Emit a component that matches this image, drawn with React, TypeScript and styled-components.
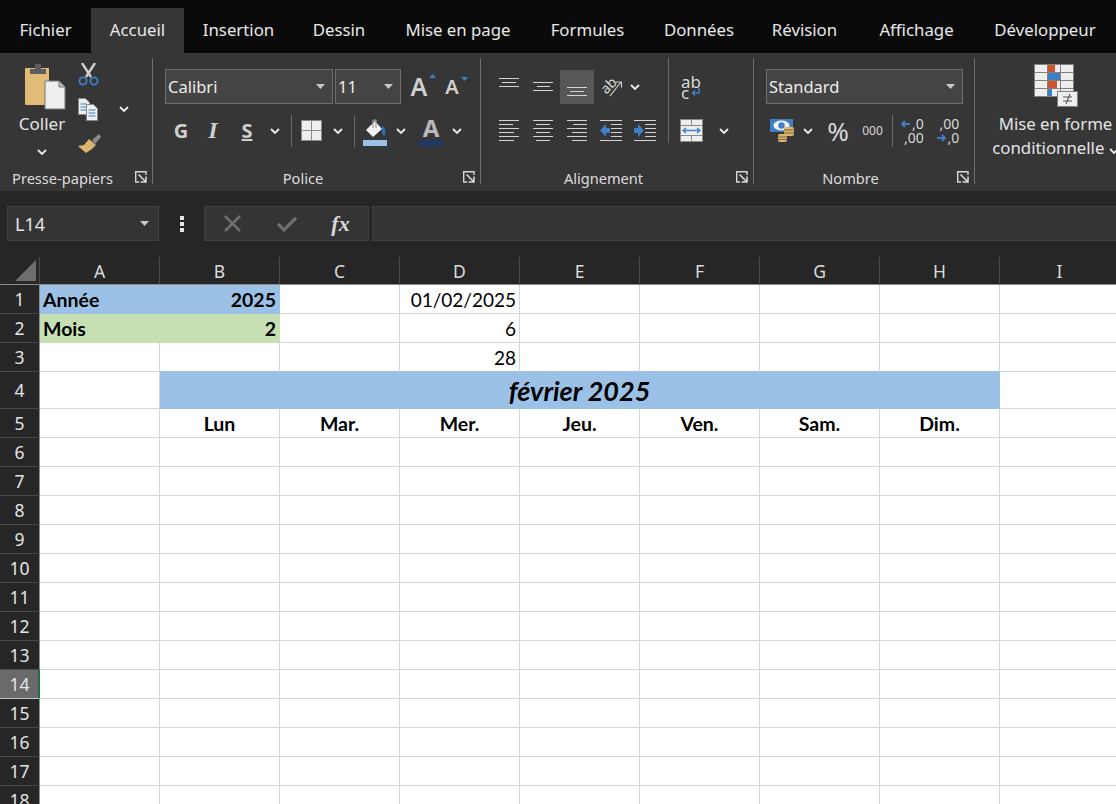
import React from "react";
import styled, { createGlobalStyle } from "styled-components";

const UI_FONT = `"Noto Sans", "Open Sans", sans-serif`;
const SHEET_FONT = `Lato, "Liberation Sans", sans-serif`;

const GlobalCSS = createGlobalStyle`
    html, body {
        margin: 0;
        height: 100%;
        overflow: hidden;
        background: #262626;
    }
    #root {
        height: 100%;
    }
`;

const WrapperCSS = styled.div`
    height: 804px;
    width: 1116px;
    overflow: hidden;
    display: flex;
    flex-direction: column;
    font-family: ${UI_FONT};
    color: #e4e4e4;
`;

/* ---------- tabs ---------- */

const TabBarCSS = styled.div`
    height: 45px;
    padding-top: 8px;
    background: #0a0a0a;
    display: flex;
    flex-shrink: 0;
`;

const TabCSS = styled.div<{ $w: number; $active?: boolean }>`
    width: ${(p) => p.$w}px;
    flex-shrink: 0;
    box-sizing: border-box;
    padding-bottom: 2px;
    display: flex;
    align-items: center;
    justify-content: center;
    font-size: 16.8px;
    white-space: nowrap;
    background: ${(p) => (p.$active ? "#363636" : "transparent")};
    color: #e8e8e8;
`;

/* ---------- ribbon ---------- */

const RibbonCSS = styled.div`
    height: 138px;
    flex-shrink: 0;
    box-sizing: border-box;
    padding: 5px 0 7px;
    background: #363636;
    display: flex;
`;

const GroupCSS = styled.div<{ $w: number; $last?: boolean }>`
    width: ${(p) => p.$w}px;
    flex-shrink: 0;
    box-sizing: border-box;
    display: flex;
    flex-direction: column;
    border-right: ${(p) => (p.$last ? "none" : "1px solid #6e6e6e")};
`;

const GroupBodyCSS = styled.div`
    flex: 1;
    min-height: 0;
    display: flex;
`;

const RowsCSS = styled.div<{ $left: number }>`
    padding: 11px 0 0 ${(p) => p.$left}px;
    display: flex;
    flex-direction: column;
    gap: 9px;
`;

const RowCSS = styled.div`
    height: 35px;
    display: flex;
    align-items: center;
`;

const GroupLabelRowCSS = styled.div`
    height: 14px;
    padding-right: 5px;
    display: flex;
    align-items: center;
`;

const GroupLabelCSS = styled.div`
    flex: 1;
    height: 14px;
    margin-right: 10px;
    text-align: center;
    font-size: 14.6px;
    line-height: 17px;
    white-space: nowrap;
    color: #dcdcdc;
`;

const ToolCSS = styled.div<{ $w: number; $active?: boolean }>`
    width: ${(p) => p.$w}px;
    height: ${(p) => (p.$active ? "34px" : "100%")};
    flex-shrink: 0;
    display: flex;
    align-items: center;
    justify-content: center;
    background: ${(p) => (p.$active ? "#575757" : "transparent")};
`;

const VRuleCSS = styled.div<{ $h?: number; $l?: number; $r?: number }>`
    width: 1px;
    height: ${(p) => p.$h ?? 32}px;
    flex-shrink: 0;
    margin-left: ${(p) => p.$l ?? 0}px;
    margin-right: ${(p) => p.$r ?? 0}px;
    background: #6a6a6a;
`;

const ComboCSS = styled.div<{ $w: number; $ml?: number }>`
    width: ${(p) => p.$w}px;
    height: 35px;
    margin-left: ${(p) => p.$ml ?? 0}px;
    box-sizing: border-box;
    flex-shrink: 0;
    padding: 0 7px 0 2px;
    display: flex;
    align-items: center;
    justify-content: space-between;
    background: #444444;
    border: 1px solid #6e6e6e;
    font-size: 16.5px;
    color: #ececec;
`;

const PasteColumnCSS = styled.div`
    width: 56px;
    margin-left: 14px;
    padding-top: 5px;
    display: flex;
    flex-direction: column;
    align-items: center;
    font-size: 17px;
`;

const PasteLabelCSS = styled.div`
    margin: 3px 0 14px;
    line-height: 22px;
`;

const ClipColumnCSS = styled.div`
    padding: 4px 0 0 8px;
    display: flex;
    flex-direction: column;
    gap: 11px;
`;

const ClipRowCSS = styled.div`
    height: 24px;
    display: flex;
    align-items: center;
    gap: 20px;
`;

const FormatBtnCSS = styled.span<{ $italic?: boolean; $underline?: boolean }>`
    font-family: ${(p) => (p.$italic ? `"Liberation Serif", serif` : UI_FONT)};
    font-size: ${(p) => (p.$italic ? "24px" : "20px")};
    font-weight: 700;
    font-style: ${(p) => (p.$italic ? "italic" : "normal")};
    text-decoration: ${(p) => (p.$underline ? "underline" : "none")};
    color: #cfcfcf;
`;

const FontSizeCSS = styled.span<{ $size: number }>`
    position: relative;
    font-size: ${(p) => p.$size}px;
    font-weight: 600;
    line-height: 1;
    color: #cfcfcf;
`;

const SizeArrowCSS = styled.svg`
    position: absolute;
    top: 0;
    right: -9px;
`;

const ColorPickCSS = styled.div`
    width: 24px;
    height: 30px;
    display: flex;
    flex-direction: column;
    align-items: center;
    justify-content: flex-end;
    font-size: 24px;
    line-height: 24px;
    font-weight: 700;
    color: #b8b8b8;
`;

const ColorBarCSS = styled.div<{ $color: string }>`
    width: 24px;
    height: 6px;
    flex-shrink: 0;
    background: ${(p) => p.$color};
`;

const WrapTextCSS = styled.div`
    width: 20px;
    font-size: 17px;
    line-height: 11px;
    color: #d8d8d8;
`;

const WrapLineCSS = styled.div`
    display: flex;
    align-items: center;
    gap: 2px;
`;

const PercentCSS = styled.span<{ $size: number }>`
    font-size: ${(p) => p.$size}px;
    color: #d8d8d8;
`;

const DecimalsCSS = styled.div`
    font-size: 14px;
    line-height: 14px;
    color: #d8d8d8;
    text-align: right;
`;

const DecimalLineCSS = styled.div`
    display: flex;
    align-items: center;
    justify-content: flex-end;
    gap: 2px;
`;

const CondFormatCSS = styled.div`
    padding: 6px 0 0 20px;
    display: flex;
    flex-direction: column;
    align-items: center;
    font-size: 16.8px;
    line-height: 24px;
    white-space: nowrap;
`;

const CondLabelCSS = styled.div`
    margin-top: 4px;
    text-align: center;
`;

/* ---------- formula bar ---------- */

const FormulaBarCSS = styled.div`
    height: 66px;
    flex-shrink: 0;
    box-sizing: border-box;
    padding: 15px 0 0 7px;
    background: #262626;
    display: flex;
    align-items: flex-start;
`;

const NameBoxCSS = styled.div`
    width: 152px;
    height: 35px;
    box-sizing: border-box;
    flex-shrink: 0;
    padding: 0 9px 0 7px;
    display: flex;
    align-items: center;
    justify-content: space-between;
    background: #343434;
    border: 1px solid #404040;
    font-size: 18px;
`;

const GripCSS = styled.div`
    width: 45px;
    height: 35px;
    flex-shrink: 0;
    display: flex;
    flex-direction: column;
    align-items: center;
    justify-content: center;
    gap: 2px;
`;

const GripDotCSS = styled.div`
    width: 4px;
    height: 4px;
    background: #e6e6e6;
`;

const FormulaBtnsCSS = styled.div`
    width: 165px;
    height: 35px;
    box-sizing: border-box;
    flex-shrink: 0;
    margin-right: 3px;
    padding-left: 1px;
    display: flex;
    align-items: center;
    background: #343434;
    border: 1px solid #404040;
`;

const FxCSS = styled.span`
    font-family: "Liberation Serif", serif;
    font-style: italic;
    font-weight: 700;
    font-size: 22px;
    color: #d8d8d8;
`;

const FormulaInputCSS = styled.div`
    flex: 1;
    height: 35px;
    box-sizing: border-box;
    background: #343434;
    border: 1px solid #404040;
    border-right: none;
`;

/* ---------- sheet ---------- */

const SheetCSS = styled.div`
    flex: 1;
    min-height: 0;
    overflow: hidden;
    display: grid;
    grid-template-columns: 40px repeat(9, 120px);
    grid-auto-rows: 29px;
    grid-template-rows: 28px 29px 29px 29px 37px;
    font-family: ${SHEET_FONT};
`;

const CornerCSS = styled.div`
    padding: 3px 0 0 15px;
    box-sizing: border-box;
    background: #262626;
    border-right: 1px solid #4a4a4a;
    border-bottom: 1px solid #8c8c8c;
`;

const ColHeadCSS = styled.div`
    box-sizing: border-box;
    display: flex;
    align-items: center;
    justify-content: center;
    background: #262626;
    border-right: 1px solid #4a4a4a;
    border-bottom: 1px solid #8c8c8c;
    font-family: ${UI_FONT};
    font-size: 17.5px;
    color: #dcdcdc;
`;

const RowHeadCSS = styled.div<{ $selected?: boolean }>`
    box-sizing: border-box;
    display: flex;
    align-items: center;
    justify-content: center;
    background: ${(p) => (p.$selected ? "#6a6a6a" : "#262626")};
    border-right: 1px solid ${(p) => (p.$selected ? "#217346" : "#8c8c8c")};
    border-bottom: 1px solid ${(p) => (p.$selected ? "#c4c4c4" : "#4a4a4a")};
    box-shadow: ${(p) => (p.$selected ? "inset -1px 0 0 #217346" : "none")};
    font-family: ${UI_FONT};
    font-size: 17.5px;
    color: #e4e4e4;
`;

type CellProps = {
    text?: string;
    span?: number;
    bg?: string;
    bold?: boolean;
    italic?: boolean;
    big?: boolean;
    align?: "left" | "right" | "center";
    bottom?: string;
};

const CellCSS = styled.div<{
    $span: number;
    $bg?: string;
    $bold?: boolean;
    $italic?: boolean;
    $big?: boolean;
    $align: string;
    $bottom?: string;
}>`
    grid-column: span ${(p) => p.$span};
    box-sizing: border-box;
    min-width: 0;
    padding: 0 3px;
    display: flex;
    align-items: center;
    justify-content: ${(p) => p.$align};
    background: ${(p) => p.$bg ?? "#ffffff"};
    border-right: 1px solid ${(p) => p.$bg ?? "#d4d4d4"};
    border-bottom: 1px solid ${(p) => p.$bottom ?? p.$bg ?? "#d4d4d4"};
    font-size: ${(p) => (p.$big ? "27px" : p.$bold ? "19.5px" : "19px")};
    font-weight: ${(p) => (p.$bold ? 700 : 400)};
    font-style: ${(p) => (p.$italic ? "italic" : "normal")};
    white-space: nowrap;
    color: #000000;
`;

/* ---------- icons ---------- */

const Chevron = () => (
    <svg width="10" height="6" viewBox="0 0 10 6">
        <path d="M1 1l4 4 4-4" fill="none" stroke="#ececec" strokeWidth="1.8" />
    </svg>
);

const Caret = () => (
    <svg width="9" height="5" viewBox="0 0 9 5">
        <path d="M0 0h9L4.5 5z" fill="#c8c8c8" />
    </svg>
);

const Launcher = () => (
    <svg width="12" height="12" viewBox="0 0 12 12" style={{ flexShrink: 0 }}>
        <path d="M11 4V0.7H0.7V11H4" fill="none" stroke="#d8d8d8" strokeWidth="1.4" />
        <path d="M3.5 3.5L10.5 10.5M5.5 11H11V5.5" fill="none" stroke="#d8d8d8" strokeWidth="1.6" />
    </svg>
);

const PasteIcon = () => (
    <svg width="47" height="47" viewBox="0 0 47 47">
        <rect x="6" y="5" width="24" height="37" rx="1" fill="#e0bc78" />
        <path d="M11 11V6h5V1h6v5h5v5z" fill="#5c5c5c" />
        <path d="M26 18h14l6 6v22H26z" fill="#eeeeee" stroke="#777777" strokeWidth="1" />
        <path d="M40 18v6h6" fill="#bcbcbc" stroke="#777777" strokeWidth="1" />
    </svg>
);

const CutIcon = () => (
    <svg width="21" height="23" viewBox="0 0 21 23">
        <path d="M4 0l9 14M17 0L8 14" stroke="#cfcfcf" strokeWidth="2.4" fill="none" />
        <circle cx="5" cy="18" r="3.6" fill="none" stroke="#3f7fc8" strokeWidth="1.8" />
        <circle cx="16" cy="18" r="3.6" fill="none" stroke="#3f7fc8" strokeWidth="1.8" />
    </svg>
);

const CopyIcon = () => (
    <svg width="21" height="23" viewBox="0 0 21 23">
        <path d="M0.5 0.5h7l4 4v12h-11z" fill="#eeeeee" stroke="#888" />
        <path d="M2.5 6h6M2.5 9h6M2.5 12h6" stroke="#3f7fc8" />
        <path d="M8.5 6.5h7l4 4v12h-11z" fill="#eeeeee" stroke="#888" />
        <path d="M10.5 12h7M10.5 15h7M10.5 18h7" stroke="#3f7fc8" />
    </svg>
);

const BrushIcon = () => (
    <svg width="24" height="22" viewBox="0 0 24 22">
        <path d="M14 7l7-6 2 3-6 7z" fill="#8c8c8c" />
        <path d="M11 6l7 6-3 3-1 1-6 4-8-7 6-1z" fill="#dcb571" />
    </svg>
);

const BorderIcon = () => (
    <svg width="21" height="21" viewBox="0 0 21 21">
        <rect x="0.5" y="0.5" width="20" height="20" fill="#eeeeee" stroke="#8a8a8a" />
        <path d="M10.5 0v21M0 10.5h21" stroke="#8a8a8a" />
    </svg>
);

const BucketIcon = () => (
    <svg width="24" height="22" viewBox="0 0 24 22">
        <path d="M12 3L3 12l7 7 9-8z" fill="#f2f2f2" />
        <path d="M10 10V2.5a2 2 0 0 1 3 0V10" fill="none" stroke="#9a9a9a" strokeWidth="1.2" />
        <path d="M19 8c3 1 4 4 3 9-1 1-3 0-3-2z" fill="#2f6fb8" />
    </svg>
);

const LinesIcon = ({ lines, w = 20 }: { lines: [number, number, number][]; w?: number }) => (
    <svg width={w} height="22" viewBox={`0 0 ${w} 22`}>
        {lines.map(([x1, x2, y]) => (
            <rect key={y} x={x1} y={y} width={x2 - x1} height="1" fill="#d4d4d4" />
        ))}
    </svg>
);

const ALIGN_TOP: [number, number, number][] = [[0, 20, 2], [3, 17, 6], [0, 20, 10]];
const ALIGN_MID: [number, number, number][] = [[0, 20, 6], [4, 17, 10], [0, 20, 14]];
const ALIGN_BOT: [number, number, number][] = [[0, 20, 11], [3, 17, 15], [0, 20, 19]];
const TEXT_LEFT: [number, number, number][] = [[0, 20, 0], [0, 14, 4], [0, 20, 8], [0, 15, 12], [0, 20, 16], [0, 15, 20]];
const TEXT_CENTER: [number, number, number][] = [[0, 20, 0], [3, 17, 4], [0, 20, 8], [3, 17, 12], [0, 20, 16], [3, 17, 20]];
const TEXT_RIGHT: [number, number, number][] = [[0, 20, 0], [6, 20, 4], [0, 20, 8], [5, 20, 12], [0, 20, 16], [5, 20, 20]];

const IndentIcon = ({ flip }: { flip?: boolean }) => (
    <svg width="22" height="22" viewBox="0 0 22 22">
        <path d="M0 0.5h22M0 20.5h22M11 4.5h11M11 8.5h11M11 12.5h11M11 16.5h11" stroke="#d4d4d4" />
        {flip ? (
            <path d="M0 8h4V4l6 6.5-6 6.5v-4H0z" fill="#3f7fc8" />
        ) : (
            <path d="M10 8H6V4L0 10.5 6 17v-4h4z" fill="#3f7fc8" />
        )}
    </svg>
);

const OrientationIcon = () => (
    <svg width="22" height="20" viewBox="0 0 22 20">
        <text
            x="0"
            y="15"
            transform="rotate(-45 6 10)"
            fontFamily={UI_FONT}
            fontSize="14"
            fill="#d8d8d8"
        >
            ab
        </text>
        <path d="M9 19L20 5M15 5h5.5v5.5" fill="none" stroke="#d0d0d0" strokeWidth="1.2" />
    </svg>
);

const ReturnArrow = () => (
    <svg width="9" height="8" viewBox="0 0 9 8">
        <path d="M8 0v5H2M4 2.5L1.5 5 4 7.5" fill="none" stroke="#3f7fc8" strokeWidth="1.5" />
    </svg>
);

const MergeIcon = () => (
    <svg width="23" height="23" viewBox="0 0 23 23">
        <rect x="0.5" y="0.5" width="22" height="22" fill="#eeeeee" stroke="#8a8a8a" />
        <path d="M0 6.5h23M0 16.5h23M11.5 0v6M11.5 17v6" stroke="#8a8a8a" />
        <path d="M3 11.5h17M6 9l-3 2.5L6 14M17 9l3 2.5L17 14" fill="none" stroke="#3f7fc8" strokeWidth="1.3" />
    </svg>
);

const CurrencyIcon = () => (
    <svg width="24" height="23" viewBox="0 0 24 23">
        <rect x="0" y="0" width="23" height="13" fill="#3f7fc8" />
        <ellipse cx="11.5" cy="6.5" rx="8" ry="5" fill="#f2f2f2" />
        <circle cx="11.5" cy="6.5" r="3.2" fill="#3f7fc8" />
        <rect x="14" y="8" width="10" height="9" rx="2" fill="#dcb571" />
        <path d="M14 11h10M14 14h10" stroke="#7d6436" />
        <rect x="8" y="15" width="9" height="8" rx="2" fill="#dcb571" />
        <path d="M8 18h9M8 20.5h9" stroke="#7d6436" />
    </svg>
);

const SmallArrow = ({ flip }: { flip?: boolean }) => (
    <svg width="9" height="8" viewBox="0 0 9 8">
        {flip ? (
            <path d="M0 4h8M5 1l3 3-3 3" fill="none" stroke="#3f7fc8" strokeWidth="1.8" />
        ) : (
            <path d="M9 4H1M4 1L1 4l3 3" fill="none" stroke="#3f7fc8" strokeWidth="1.8" />
        )}
    </svg>
);

const CondFormatIcon = () => (
    <svg width="45" height="44" viewBox="0 0 45 44" style={{ marginLeft: 2 }}>
        <rect x="0.5" y="0.5" width="39" height="32" fill="#eeeeee" stroke="#808080" />
        <rect x="13" y="1" width="8" height="7" fill="#d0532b" />
        <rect x="13" y="9" width="13" height="7" fill="#3f7fc8" />
        <rect x="13" y="17" width="10" height="7" fill="#d0532b" />
        <rect x="13" y="25" width="5" height="7" fill="#3f7fc8" />
        <path d="M0 8.5h40M0 16.5h40M0 24.5h40M13.5 0v33M26.5 0v33" stroke="#808080" />
        <rect x="23.5" y="27.5" width="20" height="15" fill="#eeeeee" stroke="#808080" />
        <path d="M29 33h9M29 37h9M36 30l-4 10" fill="none" stroke="#555555" strokeWidth="1.1" />
    </svg>
);

const CrossIcon = () => (
    <svg width="17" height="17" viewBox="0 0 17 17">
        <path d="M1 1l15 15M16 1L1 16" stroke="#6e6e6e" strokeWidth="2.6" />
    </svg>
);

const CheckIcon = () => (
    <svg width="20" height="16" viewBox="0 0 20 16">
        <path d="M1 8l6 6L19 2" fill="none" stroke="#6e6e6e" strokeWidth="3.2" />
    </svg>
);

/* ---------- data ---------- */

const TABS: [string, number][] = [
    ["Fichier", 91],
    ["Accueil", 93],
    ["Insertion", 109],
    ["Dessin", 92],
    ["Mise en page", 146],
    ["Formules", 113],
    ["Données", 110],
    ["Révision", 101],
    ["Affichage", 123],
    ["Développeur", 134],
];

const COLUMNS = ["A", "B", "C", "D", "E", "F", "G", "H", "I"];
const ROW_COUNT = 18;
const BLUE = "#9bc2e6";
const GREEN = "#c6e0b4";

const CELLS: Record<string, CellProps> = {
    A1: { text: "Année", bold: true, bg: BLUE },
    B1: { text: "2025", bold: true, bg: BLUE, align: "right" },
    D1: { text: "01/02/2025", align: "right" },
    A2: { text: "Mois", bold: true, bg: GREEN },
    B2: { text: "2", bold: true, bg: GREEN, align: "right" },
    D2: { text: "6", align: "right" },
    D3: { text: "28", align: "right", bottom: BLUE },
    B3: { bottom: BLUE },
    C3: { bottom: BLUE },
    E3: { bottom: BLUE },
    F3: { bottom: BLUE },
    G3: { bottom: BLUE },
    H3: { bottom: BLUE },
    B4: { text: "février 2025", bold: true, italic: true, big: true, bg: BLUE, span: 7, align: "center" },
    B5: { text: "Lun", bold: true, align: "center" },
    C5: { text: "Mar.", bold: true, align: "center" },
    D5: { text: "Mer.", bold: true, align: "center" },
    E5: { text: "Jeu.", bold: true, align: "center" },
    F5: { text: "Ven.", bold: true, align: "center" },
    G5: { text: "Sam.", bold: true, align: "center" },
    H5: { text: "Dim.", bold: true, align: "center" },
};

const JUSTIFY = { left: "flex-start", right: "flex-end", center: "center" };

function SheetRow({ row }: { row: number }) {
    const out: React.ReactNode[] = [];
    let skip = 0;
    COLUMNS.forEach((col) => {
        if (skip > 0) {
            skip--;
            return;
        }
        const cell = CELLS[`${col}${row}`] ?? {};
        const span = cell.span ?? 1;
        skip = span - 1;
        out.push(
            <CellCSS
                key={col}
                $span={span}
                $bg={cell.bg}
                $bold={cell.bold}
                $italic={cell.italic}
                $big={cell.big}
                $bottom={cell.bottom}
                $align={JUSTIFY[cell.align ?? "left"]}
            >
                {cell.text}
            </CellCSS>
        );
    });
    return (
        <>
            <RowHeadCSS $selected={row === 14}>{row}</RowHeadCSS>
            {out}
        </>
    );
}

function GroupLabel({ text }: { text: string }) {
    return (
        <GroupLabelRowCSS>
            <GroupLabelCSS>{text}</GroupLabelCSS>
            <Launcher />
        </GroupLabelRowCSS>
    );
}

function App() {
    return (
        <WrapperCSS>
            <GlobalCSS />
            <TabBarCSS>
                {TABS.map(([name, w]) => (
                    <TabCSS key={name} $w={w} $active={name === "Accueil"}>
                        {name}
                    </TabCSS>
                ))}
            </TabBarCSS>

            <RibbonCSS>
                <GroupCSS $w={153}>
                    <GroupBodyCSS>
                        <PasteColumnCSS>
                            <PasteIcon />
                            <PasteLabelCSS>Coller</PasteLabelCSS>
                            <Chevron />
                        </PasteColumnCSS>
                        <ClipColumnCSS>
                            <ClipRowCSS>
                                <CutIcon />
                            </ClipRowCSS>
                            <ClipRowCSS>
                                <CopyIcon />
                                <Chevron />
                            </ClipRowCSS>
                            <ClipRowCSS>
                                <BrushIcon />
                            </ClipRowCSS>
                        </ClipColumnCSS>
                    </GroupBodyCSS>
                    <GroupLabel text="Presse-papiers" />
                </GroupCSS>

                <GroupCSS $w={328}>
                    <GroupBodyCSS>
                        <RowsCSS $left={12}>
                            <RowCSS>
                                <ComboCSS $w={168}>
                                    Calibri
                                    <Caret />
                                </ComboCSS>
                                <ComboCSS $w={66} $ml={2}>
                                    11
                                    <Caret />
                                </ComboCSS>
                                <ToolCSS $w={36}>
                                    <FontSizeCSS $size={25}>
                                        A
                                        <SizeArrowCSS width="7" height="4" viewBox="0 0 7 4">
                                            <path d="M0 4h7L3.5 0z" fill="#3f7fc8" />
                                        </SizeArrowCSS>
                                    </FontSizeCSS>
                                </ToolCSS>
                                <ToolCSS $w={30}>
                                    <FontSizeCSS $size={20}>
                                        A
                                        <SizeArrowCSS width="7" height="4" viewBox="0 0 7 4">
                                            <path d="M0 0h7L3.5 4z" fill="#3f7fc8" />
                                        </SizeArrowCSS>
                                    </FontSizeCSS>
                                </ToolCSS>
                            </RowCSS>
                            <RowCSS>
                                <ToolCSS $w={32}>
                                    <FormatBtnCSS>G</FormatBtnCSS>
                                </ToolCSS>
                                <ToolCSS $w={32}>
                                    <FormatBtnCSS $italic>I</FormatBtnCSS>
                                </ToolCSS>
                                <ToolCSS $w={36}>
                                    <FormatBtnCSS $underline>S</FormatBtnCSS>
                                </ToolCSS>
                                <ToolCSS $w={20}>
                                    <Chevron />
                                </ToolCSS>
                                <VRuleCSS $l={6} $r={6} />
                                <ToolCSS $w={27}>
                                    <BorderIcon />
                                </ToolCSS>
                                <ToolCSS $w={26}>
                                    <Chevron />
                                </ToolCSS>
                                <VRuleCSS $l={3} $r={3} />
                                <ToolCSS $w={34}>
                                    <ColorPickCSS>
                                        <BucketIcon />
                                        <ColorBarCSS $color={BLUE} />
                                    </ColorPickCSS>
                                </ToolCSS>
                                <ToolCSS $w={18}>
                                    <Chevron />
                                </ToolCSS>
                                <ToolCSS $w={42}>
                                    <ColorPickCSS>
                                        A
                                        <ColorBarCSS $color="#1f3864" />
                                    </ColorPickCSS>
                                </ToolCSS>
                                <ToolCSS $w={10}>
                                    <Chevron />
                                </ToolCSS>
                            </RowCSS>
                        </RowsCSS>
                    </GroupBodyCSS>
                    <GroupLabel text="Police" />
                </GroupCSS>

                <GroupCSS $w={273}>
                    <GroupBodyCSS>
                        <RowsCSS $left={11}>
                            <RowCSS>
                                <ToolCSS $w={34}>
                                    <LinesIcon lines={ALIGN_TOP} />
                                </ToolCSS>
                                <ToolCSS $w={34}>
                                    <LinesIcon lines={ALIGN_MID} />
                                </ToolCSS>
                                <ToolCSS $w={34} $active>
                                    <LinesIcon lines={ALIGN_BOT} />
                                </ToolCSS>
                                <ToolCSS $w={36}>
                                    <OrientationIcon />
                                </ToolCSS>
                                <ToolCSS $w={10}>
                                    <Chevron />
                                </ToolCSS>
                            </RowCSS>
                            <RowCSS>
                                <ToolCSS $w={34}>
                                    <LinesIcon lines={TEXT_LEFT} />
                                </ToolCSS>
                                <ToolCSS $w={34}>
                                    <LinesIcon lines={TEXT_CENTER} />
                                </ToolCSS>
                                <ToolCSS $w={34}>
                                    <LinesIcon lines={TEXT_RIGHT} />
                                </ToolCSS>
                                <ToolCSS $w={34}>
                                    <IndentIcon />
                                </ToolCSS>
                                <ToolCSS $w={34}>
                                    <IndentIcon flip />
                                </ToolCSS>
                            </RowCSS>
                        </RowsCSS>
                        <VRuleCSS $h={85} $l={6} />
                        <RowsCSS $left={10}>
                            <RowCSS>
                                <ToolCSS $w={24}>
                                    <WrapTextCSS>
                                        ab
                                        <WrapLineCSS>
                                            c
                                            <ReturnArrow />
                                        </WrapLineCSS>
                                    </WrapTextCSS>
                                </ToolCSS>
                            </RowCSS>
                            <RowCSS>
                                <ToolCSS $w={24}>
                                    <MergeIcon />
                                </ToolCSS>
                                <ToolCSS $w={42}>
                                    <Chevron />
                                </ToolCSS>
                            </RowCSS>
                        </RowsCSS>
                    </GroupBodyCSS>
                    <GroupLabel text="Alignement" />
                </GroupCSS>

                <GroupCSS $w={221}>
                    <GroupBodyCSS>
                        <RowsCSS $left={12}>
                            <RowCSS>
                                <ComboCSS $w={197}>
                                    Standard
                                    <Caret />
                                </ComboCSS>
                            </RowCSS>
                            <RowCSS>
                                <ToolCSS $w={31}>
                                    <CurrencyIcon />
                                </ToolCSS>
                                <ToolCSS $w={22}>
                                    <Chevron />
                                </ToolCSS>
                                <ToolCSS $w={38}>
                                    <PercentCSS $size={26}>%</PercentCSS>
                                </ToolCSS>
                                <ToolCSS $w={31}>
                                    <PercentCSS $size={12}>000</PercentCSS>
                                </ToolCSS>
                                <VRuleCSS $l={4} $r={4} />
                                <ToolCSS $w={31}>
                                    <DecimalsCSS>
                                        <DecimalLineCSS>
                                            <SmallArrow />
                                            ,0
                                        </DecimalLineCSS>
                                        <DecimalLineCSS>,00</DecimalLineCSS>
                                    </DecimalsCSS>
                                </ToolCSS>
                                <ToolCSS $w={40}>
                                    <DecimalsCSS>
                                        <DecimalLineCSS>,00</DecimalLineCSS>
                                        <DecimalLineCSS>
                                            <SmallArrow flip />
                                            ,0
                                        </DecimalLineCSS>
                                    </DecimalsCSS>
                                </ToolCSS>
                            </RowCSS>
                        </RowsCSS>
                    </GroupBodyCSS>
                    <GroupLabel text="Nombre" />
                </GroupCSS>

                <GroupCSS $w={141} $last>
                    <CondFormatCSS>
                        <CondFormatIcon />
                        <CondLabelCSS>
                            Mise en forme
                            <br />
                            conditionnelle <Chevron />
                        </CondLabelCSS>
                    </CondFormatCSS>
                </GroupCSS>
            </RibbonCSS>

            <FormulaBarCSS>
                <NameBoxCSS>
                    L14
                    <Caret />
                </NameBoxCSS>
                <GripCSS>
                    <GripDotCSS />
                    <GripDotCSS />
                    <GripDotCSS />
                </GripCSS>
                <FormulaBtnsCSS>
                    <ToolCSS $w={53}>
                        <CrossIcon />
                    </ToolCSS>
                    <ToolCSS $w={56}>
                        <CheckIcon />
                    </ToolCSS>
                    <ToolCSS $w={51}>
                        <FxCSS>fx</FxCSS>
                    </ToolCSS>
                </FormulaBtnsCSS>
                <FormulaInputCSS />
            </FormulaBarCSS>

            <SheetCSS>
                <CornerCSS>
                    <svg width="21" height="21" viewBox="0 0 21 21">
                        <path d="M21 0v21H0z" fill="#6e6e6e" />
                    </svg>
                </CornerCSS>
                {COLUMNS.map((col) => (
                    <ColHeadCSS key={col}>{col}</ColHeadCSS>
                ))}
                {Array.from({ length: ROW_COUNT }, (_, i) => (
                    <SheetRow key={i} row={i + 1} />
                ))}
            </SheetCSS>
        </WrapperCSS>
    );
}

export default App;
